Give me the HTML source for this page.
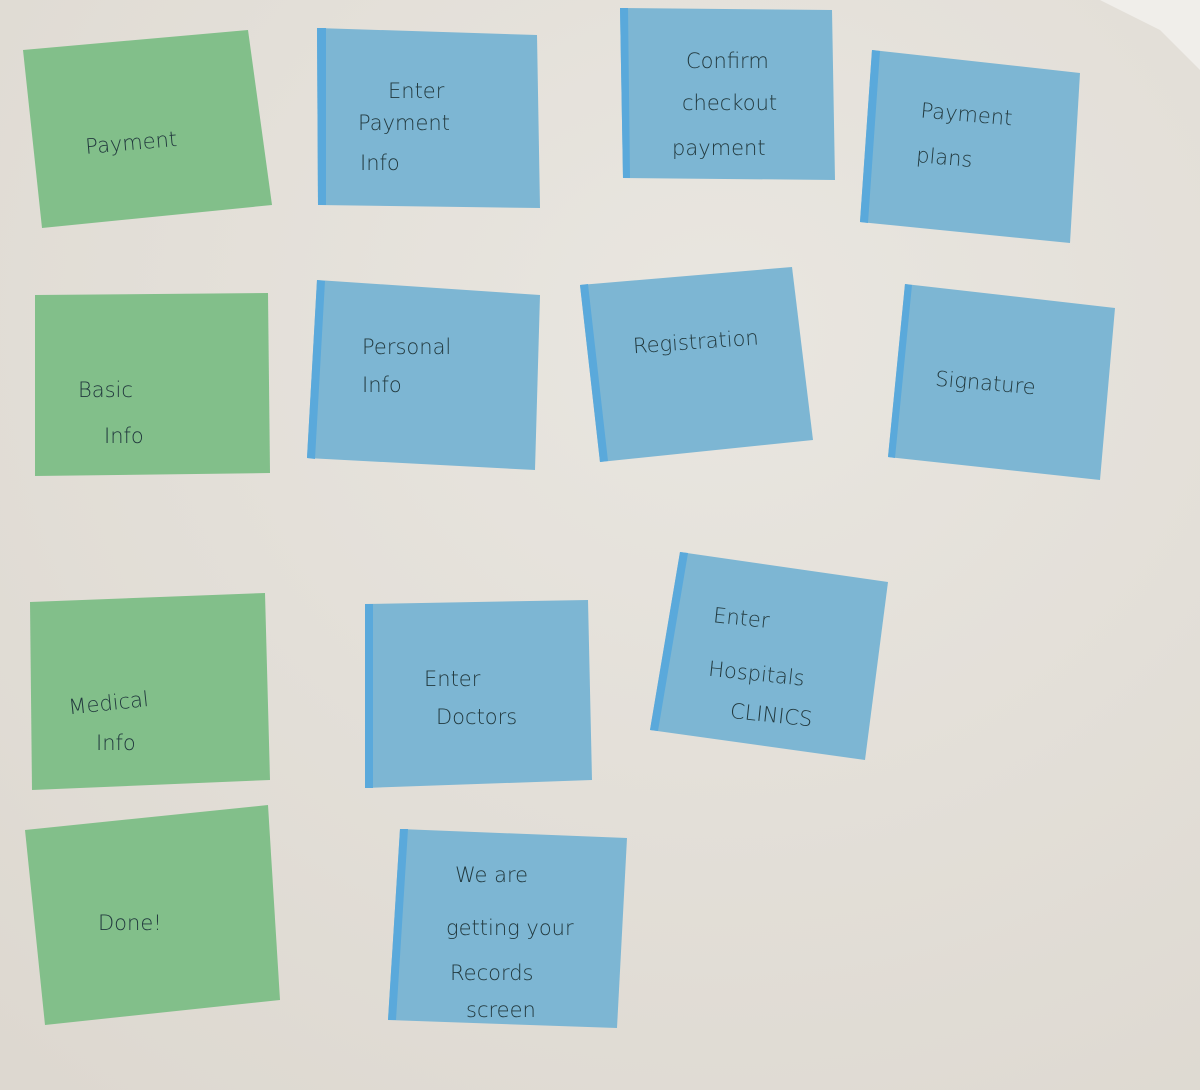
<!DOCTYPE html>
<html><head><meta charset="utf-8"><style>
html,body{margin:0;padding:0;width:1200px;height:1090px;overflow:hidden;background:#e3dfd8}
svg{display:block}
text{font-family:"DejaVu Sans","Liberation Sans",sans-serif;fill:#22393e;font-size:21px;font-weight:300}
.g{fill:#82bf8a}.b{fill:#7db6d3}
.ge{fill:#6bb37a}.be{fill:#5aa9db}
</style></head><body>
<svg width="1200" height="1090" viewBox="0 0 1200 1090" xmlns="http://www.w3.org/2000/svg">
<defs><radialGradient id="bg" cx="0.6" cy="0.3" r="0.9"><stop offset="0" stop-color="#e9e6e0"/><stop offset="1" stop-color="#ddd8d0"/></radialGradient></defs>
<rect width="1200" height="1090" fill="url(#bg)"/>
<polygon points="1100,0 1200,0 1200,70 1160,30" fill="#f0eeea"/>
<polygon class="g" points="23,50 248,30 272,205 42,228"/>
<polygon class="b" points="317,28 537,35 540,208 318,205"/>
<polygon class="be" points="317,28 326,28 326,205 318,205"/>
<polygon class="b" points="620,8 832,10 835,180 623,178"/>
<polygon class="be" points="620,8 628,8 630,178 623,178"/>
<polygon class="b" points="872,50 1080,73 1070,243 860,222"/>
<polygon class="be" points="872,50 880,51 868,223 860,222"/>
<polygon class="g" points="35,295 268,293 270,473 35,476"/>
<polygon class="b" points="317,280 540,295 535,470 307,458"/>
<polygon class="be" points="317,280 325,281 315,459 307,458"/>
<polygon class="b" points="580,285 792,267 813,440 600,462"/>
<polygon class="be" points="580,285 588,284 608,461 600,462"/>
<polygon class="b" points="905,284 1115,308 1100,480 888,457"/>
<polygon class="be" points="905,284 912,285 895,458 888,457"/>
<polygon class="g" points="30,602 265,593 270,780 32,790"/>
<polygon class="b" points="365,604 588,600 592,780 365,788"/>
<polygon class="be" points="365,604 373,604 373,788 365,788"/>
<polygon class="b" points="680,552 888,582 865,760 650,730"/>
<polygon class="be" points="680,552 688,553 658,731 650,730"/>
<polygon class="g" points="25,830 268,805 280,1000 45,1025"/>
<polygon class="b" points="400,829 627,838 617,1028 388,1020"/>
<polygon class="be" points="400,829 408,829 396,1020 388,1020"/>
<text x="85" y="150" transform="rotate(-5 130 140)" font-size="24">Payment</text>
<text x="388" y="98">Enter</text>
<text x="358" y="130">Payment</text>
<text x="360" y="170" font-size="24">Info</text>
<text x="686" y="68" font-size="20">Confirm</text>
<text x="682" y="110" font-size="22">checkout</text>
<text x="672" y="155" font-size="20">payment</text>
<text x="920" y="120" transform="rotate(5 950 120)" font-size="18">Payment</text>
<text x="916" y="165" transform="rotate(5 950 160)" font-size="19">plans</text>
<text x="78" y="397" font-size="28">Basic</text>
<text x="104" y="443" font-size="26">Info</text>
<text x="362" y="354" font-size="18">Personal</text>
<text x="362" y="392" font-size="20">Info</text>
<text x="633" y="350" transform="rotate(-4 680 345)" font-size="18">Registration</text>
<text x="935" y="390" transform="rotate(5 985 385)" font-size="24">Signature</text>
<text x="68" y="710" transform="rotate(-6 110 700)" font-size="24">Medical</text>
<text x="96" y="750" font-size="24">Info</text>
<text x="424" y="686" font-size="24">Enter</text>
<text x="436" y="724" font-size="22">Doctors</text>
<text x="713" y="625" transform="rotate(6 740 620)" font-size="24">Enter</text>
<text x="708" y="680" transform="rotate(6 750 675)" font-size="24">Hospitals</text>
<text x="730" y="722" transform="rotate(6 770 715)" font-size="24">CLINICS</text>
<text x="98" y="930" font-size="26">Done!</text>
<text x="455" y="882" font-size="24">We are</text>
<text x="446" y="935" font-size="22">getting your</text>
<text x="450" y="980" font-size="22">Records</text>
<text x="466" y="1017" font-size="22">screen</text>
</svg>
</body></html>
